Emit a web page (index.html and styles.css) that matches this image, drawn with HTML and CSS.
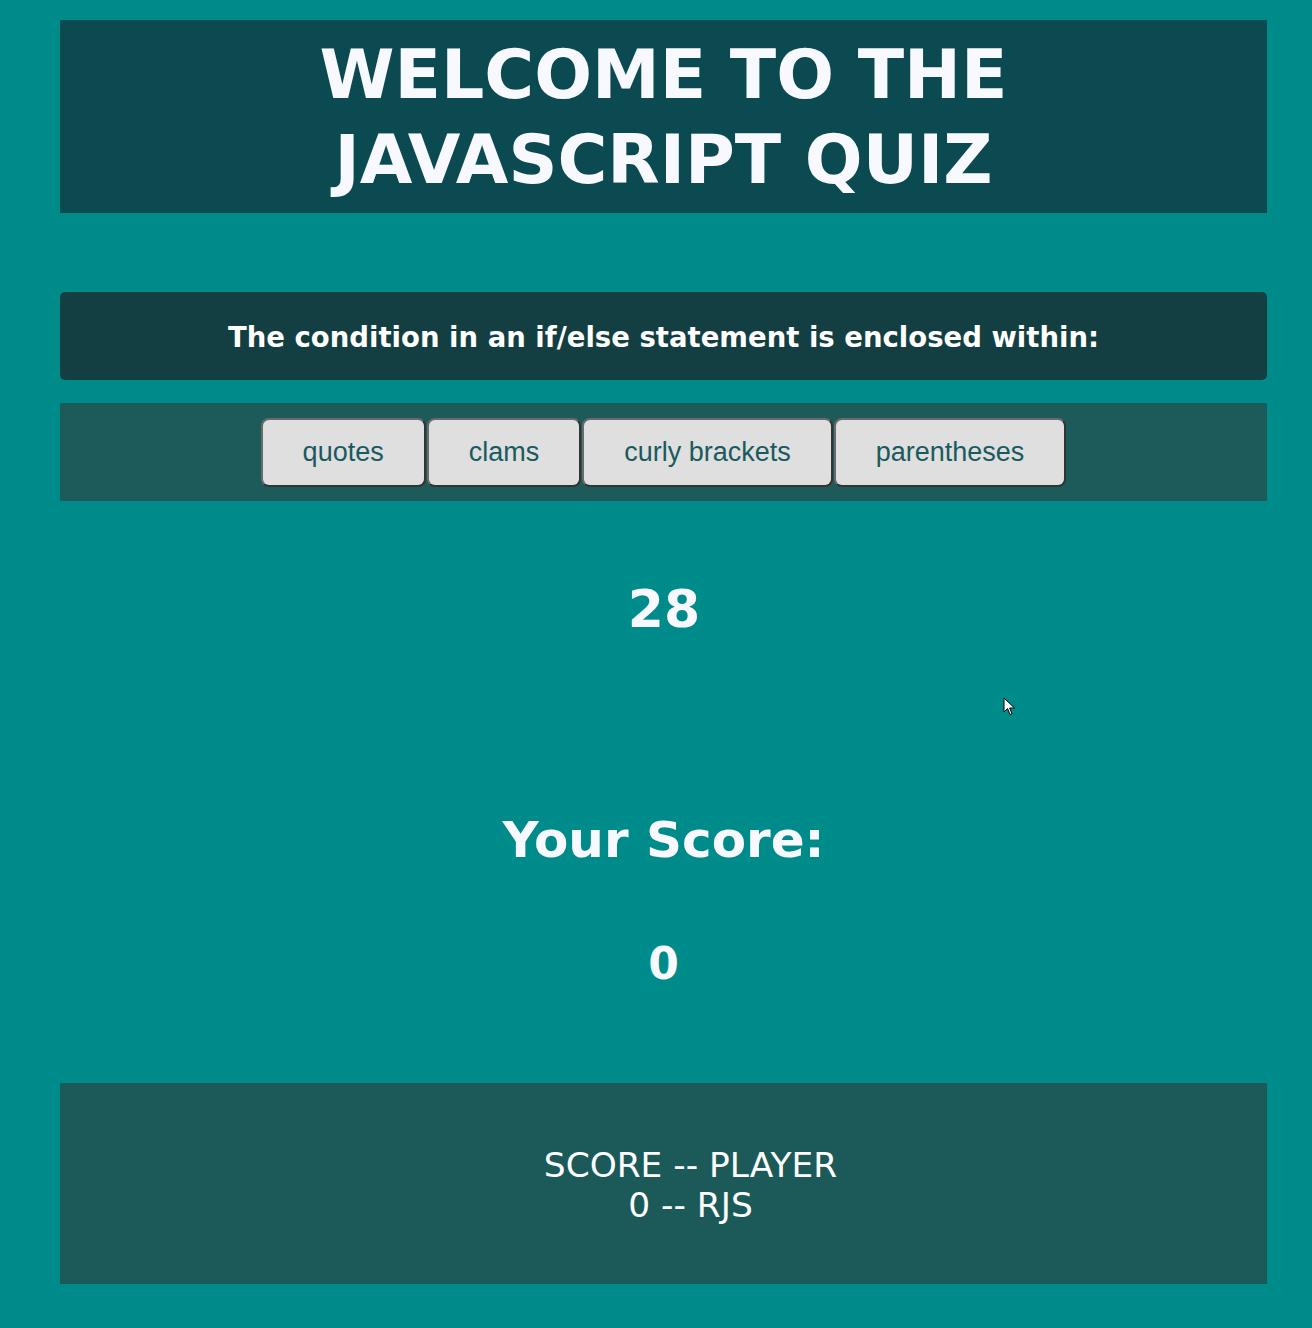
FILE: index.html
```html
<!DOCTYPE html>
<html>
<head>
<meta charset="utf-8">
<title>JavaScript Quiz</title>
<link rel="stylesheet" href="styles.css">
</head>
<body>
<div class="page">
  <header class="banner">
    <h1 class="title">WELCOME TO THE<br>JAVASCRIPT QUIZ</h1>
  </header>
  <section class="question">
    <p class="question-text">The condition in an if/else statement is enclosed within:</p>
  </section>
  <section class="answers">
    <button class="answer">quotes</button>
    <button class="answer">clams</button>
    <button class="answer">curly brackets</button>
    <button class="answer">parentheses</button>
  </section>
  <div class="timer">28</div>
  <h2 class="score-label">Your Score:</h2>
  <div class="score-value">0</div>
  <footer class="scoreboard">
    <div class="board-lines">
      <div>SCORE -- PLAYER</div>
      <div>0 -- RJS</div>
    </div>
  </footer>
</div>
<svg class="cursor" width="13" height="20" viewBox="0 0 13 20">
  <path d="M1 1 L1 15 L4.5 11.5 L7 17.5 L9 16.7 L6.6 11 L11.5 11 Z" fill="#fff" stroke="#000" stroke-width="1" stroke-linejoin="round"/>
</svg>
</body>
</html>
```

FILE: styles.css
```css
html, body {
  margin: 0;
  padding: 0;
  background: #008b8b;
}
body {
  font-family: "DejaVu Sans", Verdana, sans-serif;
  color: #f8f8ff;
  position: relative;
}
.page {
  width: 1207px;
  margin: 0 0 0 60px;
  padding: 20px 0 44px;
  display: flex;
  flex-direction: column;
}
.banner {
  background: #0c4a52;
  height: 193px;
  display: flex;
  align-items: center;
  justify-content: center;
}
.title {
  margin: 0;
  font-size: 68px;
  line-height: 85px;
  font-weight: bold;
  text-align: center;
  color: #f8f8ff;
}
.question {
  margin-top: 79px;
  height: 88px;
  background: #133f42;
  border-radius: 5px;
  display: flex;
  align-items: center;
  justify-content: center;
}
.question-text {
  margin: 0;
  font-size: 27.5px;
  font-weight: bold;
  color: #ffffff;
  padding-top: 2px;
}
.answers {
  margin-top: 23px;
  height: 98px;
  background: #1d5a5a;
  display: flex;
  align-items: center;
  justify-content: center;
  gap: 1px;
}
.answer {
  height: 69px;
  padding: 0 40px;
  background: #dedfde;
  border: 2px solid #333333;
  border-top-color: #6a6a6a;
  border-left-color: #6a6a6a;
  border-radius: 8px;
  font-family: "Liberation Sans", Arial, sans-serif;
  font-size: 27px;
  color: #1a5a5e;
}
.timer {
  margin-top: 78px;
  text-align: center;
  font-size: 52px;
  font-weight: bold;
  line-height: 60px;
  padding-left: 1px;
}
.score-label {
  margin: 168px 0 0;
  text-align: center;
  font-size: 50px;
  line-height: 66px;
  font-weight: bold;
}
.score-value {
  margin-top: 63px;
  text-align: center;
  font-size: 44px;
  line-height: 56px;
  font-weight: bold;
}
.scoreboard {
  margin-top: 91px;
  height: 201px;
  box-sizing: border-box;
  background: #1c5a5a;
  display: flex;
  align-items: center;
  justify-content: center;
  padding: 2px 0 0 54px;
}
.board-lines {
  text-align: center;
  font-size: 34.4px;
  line-height: 40px;
  color: #ffffff;
}
.cursor {
  position: absolute;
  left: 1003px;
  top: 697px;
}
```
